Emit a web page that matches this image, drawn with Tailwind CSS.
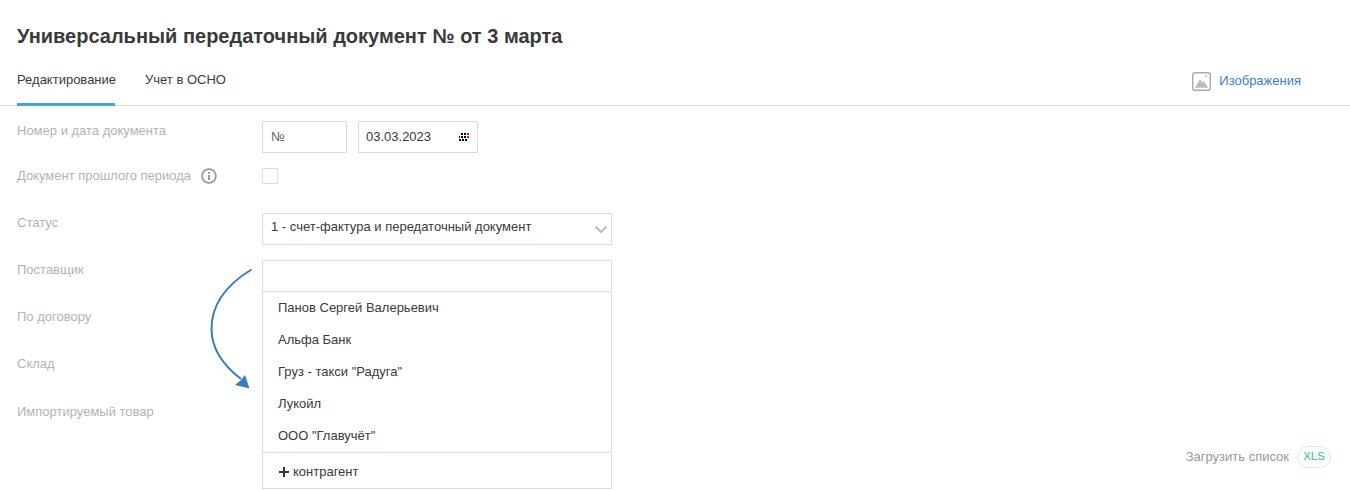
<!DOCTYPE html>
<html lang="ru">
<head>
<meta charset="utf-8">
<script src="https://cdn.jsdelivr.net/npm/@tailwindcss/browser@4"></script>
</head>
<body class="bg-white font-['Liberation_Sans',sans-serif] text-[13px] text-[#3a3a3a] overflow-hidden">
<div class="relative h-[491px] w-[1350px] overflow-hidden">
  <h1 class="pl-[17px] pt-[24px] text-[20px] leading-[24px] font-bold text-[#3a3a3a]">Универсальный передаточный документ № от 3 марта</h1>
  <div class="mt-[18px] flex h-[40px] items-start border-b border-[#ddd] pl-[17px]">
    <div class="h-[40px] w-[98px] border-b-[3px] border-[#3ea5e4] pt-[6px] leading-[16px]">Редактирование</div>
    <div class="ml-[30px] pt-[6px] leading-[16px]">Учет в ОСНО</div>
    <div class="ml-auto mr-[49px] flex items-center gap-[8px] text-[#3b7fc9]">
      <svg width="19" height="19" viewBox="0 0 20 20" class="mt-[6px]"><rect x="0.75" y="0.75" width="18.5" height="18.5" rx="2.5" fill="#fff" stroke="#aaa" stroke-width="1.5"/><path d="M3 16.5 L8.5 7.5 L11 11 L12.5 9.5 L17 16.5 Z" fill="#bbb"/><circle cx="15" cy="4.5" r="1.1" fill="#bbb"/></svg>
      <span class="mt-[5px] leading-[20px]">Изображения</span>
    </div>
  </div>
  <div class="grid grid-cols-[245px_350px] pl-[17px] pt-[15px] text-[#b3b3b3]">
    <div class="h-[47px] pt-[2px] leading-[16px]">Номер и дата документа</div>
    <div class="flex h-[47px] gap-[11px] text-[#3a3a3a]">
      <div class="flex h-[32px] w-[85px] items-center border border-[#ddd] pl-[8px] text-[#666]">№</div>
      <div class="flex h-[32px] w-[120px] items-center justify-between border border-[#ddd] pl-[7px] pr-[7px]">
        <span>03.03.2023</span>
        <svg width="11" height="8" viewBox="0 0 11 8" shape-rendering="crispEdges"><g fill="#000"><rect x="2" y="0" width="2" height="2"/><rect x="5" y="0" width="2" height="2"/><rect x="2" y="3" width="2" height="2"/><rect x="5" y="3" width="2" height="2"/><rect x="0" y="6" width="2" height="2"/><rect x="3" y="6" width="2" height="2"/><rect x="6" y="6" width="2" height="2"/><rect x="0" y="3" width="1" height="2"/></g><g fill="#e8112d"><rect x="8" y="0" width="2" height="2"/><rect x="8" y="3" width="2" height="2"/></g></svg>
      </div>
    </div>
    <div class="flex h-[45px] items-start gap-[10px]">
      <span class="leading-[16px]">Документ прошлого периода</span>
      <svg width="16" height="16" viewBox="0 0 16 16"><circle cx="8" cy="8" r="6.9" fill="none" stroke="#999" stroke-width="1.7"/><circle cx="8" cy="4.9" r="1.1" fill="#999"/><rect x="7" y="7" width="2" height="5" fill="#999"/></svg>
    </div>
    <div class="h-[45px]"><div class="h-[16px] w-[16px] border border-[#ddd]"></div></div>
    <div class="h-[47px] pt-[2px] leading-[16px]">Статус</div>
    <div class="relative h-[47px]">
      <div class="flex h-[32px] w-[350px] items-center justify-between border border-[#ddd] pl-[8px] pr-[3px] text-[#3a3a3a]">
        <span class="-mt-[4px]">1 - счет-фактура и передаточный документ</span>
        <svg width="14" height="9" viewBox="0 0 14 9"><path d="M1.5 1.5 L7 7 L12.5 1.5" fill="none" stroke="#bbb" stroke-width="2"/></svg>
      </div>
    </div>
    <div class="h-[47px] pt-[2px] leading-[16px]">Поставщик</div>
    <div class="relative h-[47px]">
      <div class="absolute left-0 top-0 z-10 w-[350px] border border-[#ddd] bg-white text-[#3a3a3a]">
        <div class="h-[31px] border-b border-[#ddd]"></div>
        <ul class="border-b border-[#ddd] pl-[15px]">
          <li class="flex h-[32px] items-center">Панов Сергей Валерьевич</li>
          <li class="flex h-[32px] items-center">Альфа Банк</li>
          <li class="flex h-[32px] items-center">Груз - такси "Радуга"</li>
          <li class="flex h-[32px] items-center">Лукойл</li>
          <li class="flex h-[32px] items-center">ООО "Главучёт"</li>
        </ul>
        <div class="flex h-[35px] items-center gap-[4px] pl-[16px] pt-[2px]">
          <svg width="10" height="10" viewBox="0 0 10 10"><path d="M5 0V10M0 5H10" stroke="#333" stroke-width="2"/></svg>
          <span>контрагент</span>
        </div>
      </div>
    </div>
    <div class="h-[47px] pt-[2px] leading-[16px]">По договору</div><div></div>
    <div class="h-[48px] pt-[2px] leading-[16px]">Склад</div><div></div>
    <div class="h-[47px] pt-[2px] leading-[16px]">Импортируемый товар</div><div></div>
  </div>
  <div class="absolute right-[19px] top-[446px] flex items-center gap-[8px] text-[#999]">
    <span>Загрузить список</span>
    <span class="flex h-[22px] w-[34px] items-center justify-center rounded-full border border-[#d5efe2] text-[11.5px] text-[#3bbd85]">XLS</span>
  </div>
  <svg class="absolute left-[205px] top-[262px]" width="50" height="132" viewBox="205 262 50 132">
    <path d="M251.5 269.5 C 226 285, 211 305, 211.5 330 C 212 350, 224 366, 241 379" fill="none" stroke="#3a7cc0" stroke-width="2"/>
    <path d="M249.5 388.5 L235 385 L241 380 L245 375 Z" fill="#3a7cc0"/>
  </svg>
</div>
</body>
</html>
